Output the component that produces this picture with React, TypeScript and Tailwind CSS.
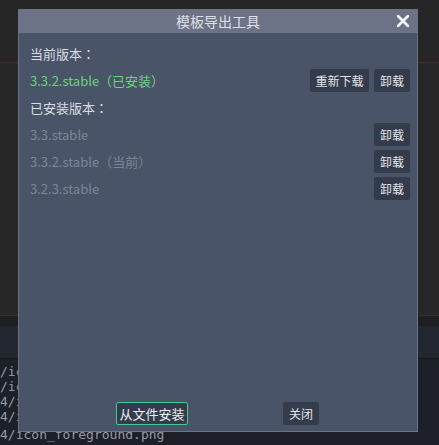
const cjk = "font-['Noto_Sans_CJK_TC','Noto_Sans_CJK_SC',sans-serif]";

function Btn({ label, w }: { label: string; w: string }) {
  return (
    <button
      className={`${w} flex h-[23px] items-center justify-center rounded-[2px] bg-[#343c4c] text-[12px] text-[#e2e4e8]`}
    >
      {label}
    </button>
  );
}

const installed = [
  { name: "3.3.stable", note: "" },
  { name: "3.3.2.stable", note: "（当前）" },
  { name: "3.2.3.stable", note: "" },
];

export default function App() {
  return (
    <div className={`${cjk} relative h-[445px] w-[439px] overflow-hidden bg-[#262626]`}>
      {/* editor behind the dialog */}
      <div className="flex h-full flex-col">
        <div className="h-[62px]" />
        <div className="h-px bg-[#4a2b30]" />
        <div className="h-[252px] bg-[#272727]" />
        <div className="h-px bg-[#303030]" />
        <div className="h-[10px] bg-[#1e1f23]" />
        <div className="h-[32px] bg-[#232730]" />
        <div className="h-px bg-[#15171c]" />
        <div className="flex-1 bg-[#1d2028] pt-[5px] font-['DejaVu_Sans_Mono',monospace] text-[13px] leading-[15px] text-[#969ba4]">
          <div>/icon.png</div>
          <div>/icon_background.png</div>
          <div>4/icon.png</div>
          <div>4/icon_background.png</div>
          <div className="mt-[3px]">4/icon_foreground.png</div>
        </div>
      </div>

      {/* dialog */}
      <div className="absolute left-[18px] top-[9px] flex h-[423px] w-[400px] flex-col bg-[#6c7387] px-px pb-px">
        <div className="relative flex h-[24px] items-center justify-center text-[14px] text-[#dde0e5]">
          模板导出工具
          <svg
            className="absolute right-[8px] top-[6px]"
            width="12"
            height="12"
            viewBox="0 0 12 12"
          >
            <path d="M1 1L11 11M11 1L1 11" stroke="#f4f5f7" strokeWidth="2.6" strokeLinecap="round" />
          </svg>
        </div>
        <div className="flex flex-1 flex-col bg-[#4a5468] pb-[6px] pl-[11px] pr-[7px] pt-[9px] text-[13px]">
          <div className="flex flex-col gap-[4px]">
            <div className="flex h-[23px] items-center text-[#dadde2]">当前版本：</div>
            <div className="flex h-[23px] items-center justify-between">
              <span className="text-[#6dd17d]">3.3.2.stable（已安装）</span>
              <div className="flex gap-[5px]">
                <Btn label="重新下载" w="w-[59px]" />
                <Btn label="卸载" w="w-[36px]" />
              </div>
            </div>
            <div className="flex h-[23px] items-center text-[#dadde2]">已安装版本：</div>
            {installed.map((v) => (
              <div key={v.name} className="flex h-[23px] items-center justify-between">
                <span className="text-[#7d8597]">
                  {v.name}
                  {v.note}
                </span>
                <Btn label="卸载" w="w-[36px]" />
              </div>
            ))}
          </div>
          <div className="mt-auto flex pl-[86px]">
            <button className="flex h-[23px] w-[72px] items-center justify-center rounded-[2px] border border-[#3fcb8c] bg-[#343c4c] text-[13px] text-[#eceef1]">
              从文件安装
            </button>
            <div className="ml-[95px]">
              <Btn label="关闭" w="w-[36px]" />
            </div>
          </div>
        </div>
      </div>
    </div>
  );
}
